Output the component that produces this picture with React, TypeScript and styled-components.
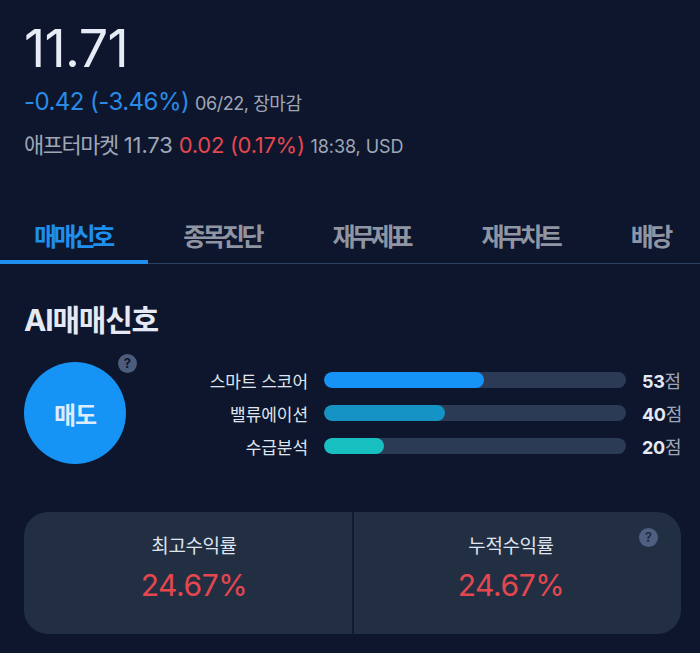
import styled, { createGlobalStyle } from 'styled-components';

const GlobalStyle = createGlobalStyle`
  html, body {
    margin: 0;
    padding: 0;
    background: #0d162c;
    overflow: hidden;
  }
  * {
    box-sizing: border-box;
  }
`;

const scores = [
  { label: '스마트 스코어', value: 53, color: '#1594f5' },
  { label: '밸류에이션', value: 40, color: '#1593c4' },
  { label: '수급분석', value: 20, color: '#17bfc0' },
];

const tabs = ['매매신호', '종목진단', '재무제표', '재무차트', '배당'];

function App(): JSX.Element {
  return (
    <Page>
      <GlobalStyle />
      <Quote>
        <Price>11.71</Price>
        <ChangeRow>
          <Change $tone="down" $size={24} $spacing={-0.55}>-0.42 (-3.46%)</Change>
          <Meta $spacing={-0.45}>06/22, 장마감</Meta>
        </ChangeRow>
        <AfterRow>
          <AfterLabel>애프터마켓</AfterLabel>
          <AfterPrice>11.73</AfterPrice>
          <Change $tone="up" $size={22} $spacing={-0.3}>0.02 (0.17%)</Change>
          <Meta $spacing={-0.1}>18:38, USD</Meta>
        </AfterRow>
      </Quote>
      <Tabs>
        {tabs.map((tab, i) => (
          <Tab key={tab} $active={i === 0}>{tab}</Tab>
        ))}
      </Tabs>
      <Section>
        <Title>AI매매신호</Title>
        <SignalRow>
          <Signal>
            매도
            <SignalHelp>?</SignalHelp>
          </Signal>
          <Scores>
            {scores.map((s) => (
              <ScoreRow key={s.label}>
                <ScoreLabel>{s.label}</ScoreLabel>
                <Track>
                  <Fill style={{ width: `${s.value}%` }} $color={s.color} />
                </Track>
                <ScoreValue>
                  <b>{s.value}</b>점
                </ScoreValue>
              </ScoreRow>
            ))}
          </Scores>
        </SignalRow>
        <ReturnCard>
          <ReturnCell $side="left">
            <ReturnLabel>최고수익률</ReturnLabel>
            <ReturnValue>24.67%</ReturnValue>
          </ReturnCell>
          <ReturnCell $side="right">
            <ReturnLabel>누적수익률</ReturnLabel>
            <ReturnValue>24.67%</ReturnValue>
            <CardHelp>?</CardHelp>
          </ReturnCell>
        </ReturnCard>
      </Section>
    </Page>
  );
}

export default App;

const Page = styled.div`
  width: 700px;
  height: 653px;
  overflow: hidden;
  background: #0d162c;
  color: #e4e9f3;
  font-family: Inter, 'Noto Sans CJK KR', sans-serif;
`;

const Quote = styled.header`
  height: 210px;
  padding: 18px 24px 0;
`;

const Price = styled.div`
  font-size: 52px;
  line-height: 62px;
  font-weight: 400;
  letter-spacing: -0.6px;
  color: #e6ebf5;
`;

const ChangeRow = styled.div`
  display: flex;
  align-items: baseline;
  gap: 6px;
  margin-top: 7px;
  height: 30px;
  line-height: 30px;
`;

const AfterRow = styled.div`
  display: flex;
  align-items: baseline;
  gap: 6px;
  margin-top: 14px;
  height: 28px;
  line-height: 28px;
`;

const Change = styled.span<{ $tone: 'up' | 'down'; $size: number; $spacing: number }>`
  font-size: ${({ $size }) => $size}px;
  letter-spacing: ${({ $spacing }) => $spacing}px;
  color: ${({ $tone }) => ($tone === 'up' ? '#e5474f' : '#2a8be6')};
`;

const Meta = styled.span<{ $spacing: number }>`
  font-size: 18px;
  letter-spacing: ${({ $spacing }) => $spacing}px;
  color: #9fa6b5;
`;

const AfterLabel = styled.span`
  font-size: 22px;
  letter-spacing: -1.5px;
  color: #9fa6b5;
`;

const AfterPrice = styled.span`
  font-size: 22px;
  letter-spacing: -0.1px;
  color: #9fa6b5;
`;

const Tabs = styled.nav`
  display: flex;
  height: 54px;
  border-bottom: 1px solid #2b4163;
`;

const Tab = styled.div<{ $active?: boolean }>`
  flex: none;
  padding: 0 36.6px 0 34px;
  margin: 0 1px -1px 0;
  height: 54px;
  line-height: 55px;
  font-size: 25px;
  font-weight: 700;
  letter-spacing: -3.6px;
  white-space: nowrap;
  color: ${({ $active }) => ($active ? '#1e8fed' : '#8f95a3')};
  border-bottom: ${({ $active }) => ($active ? '4px solid #1e8fed' : 'none')};
`;

const Section = styled.section`
  padding: 36px 19px 0 24px;
`;

const Title = styled.h2`
  margin: 0;
  font-size: 30px;
  line-height: 40px;
  font-weight: 700;
  letter-spacing: -1.2px;
  color: #e4e9f3;
`;

const SignalRow = styled.div`
  display: flex;
  align-items: center;
  margin-top: 22px;
`;

const Signal = styled.div`
  position: relative;
  flex: none;
  width: 102px;
  height: 102px;
  border-radius: 50%;
  background: #1594f5;
  display: flex;
  align-items: center;
  justify-content: center;
  font-size: 24px;
  font-weight: 700;
  letter-spacing: -1px;
  color: #dcecfb;
`;

const HelpBadge = styled.span`
  position: absolute;
  width: 19px;
  height: 19px;
  border-radius: 50%;
  background: #4d5c7c;
  color: #0d162c;
  font-size: 13px;
  font-weight: 700;
  letter-spacing: 0;
  line-height: 19px;
  text-align: center;
`;

const SignalHelp = styled(HelpBadge)`
  top: -8px;
  right: -11px;
`;

const CardHelp = styled(HelpBadge)`
  top: 16px;
  right: 23px;
  background: #4f5f80;
  color: #232f44;
`;

const Scores = styled.div`
  flex: 1;
  display: flex;
  flex-direction: column;
  gap: 17px;
`;

const ScoreRow = styled.div`
  display: flex;
  align-items: center;
  height: 16px;
`;

const ScoreLabel = styled.span`
  flex: none;
  width: 182px;
  text-align: right;
  font-size: 17px;
  letter-spacing: -0.05px;
  color: #dfe4ee;
`;

const Track = styled.div`
  flex: none;
  width: 302px;
  height: 16px;
  margin-left: 16px;
  border-radius: 8px;
  background: #2b3a55;
  overflow: hidden;
`;

const Fill = styled.div<{ $color: string }>`
  height: 100%;
  border-radius: 8px;
  background: ${({ $color }) => $color};
`;

const ScoreValue = styled.span`
  flex: none;
  margin-left: 16px;
  font-size: 18px;
  white-space: nowrap;
  letter-spacing: -0.3px;
  color: #9fa6b5;
  b {
    font-size: 18px;
    font-weight: 700;
    color: #e4e9f3;
  }
`;

const ReturnCard = styled.div`
  display: grid;
  grid-template-columns: 328px 1fr;
  height: 122px;
  margin-top: 48px;
  border-radius: 24px;
  background: #222f43;
  overflow: hidden;
`;

const ReturnCell = styled.div<{ $side: 'left' | 'right' }>`
  position: relative;
  display: flex;
  flex-direction: column;
  align-items: center;
  padding-top: 22px;
  padding-left: ${({ $side }) => ($side === 'left' ? '12px' : '0')};
  padding-right: ${({ $side }) => ($side === 'right' ? '13px' : '0')};
  & + & {
    border-left: 2px solid #0f1c30;
  }
`;

const ReturnLabel = styled.div`
  font-size: 19px;
  line-height: 26px;
  letter-spacing: -0.4px;
  color: #dfe4ee;
`;

const ReturnValue = styled.div`
  font-size: 30px;
  line-height: 36px;
  margin-top: 7px;
  letter-spacing: -0.4px;
  color: #e5474f;
`;
